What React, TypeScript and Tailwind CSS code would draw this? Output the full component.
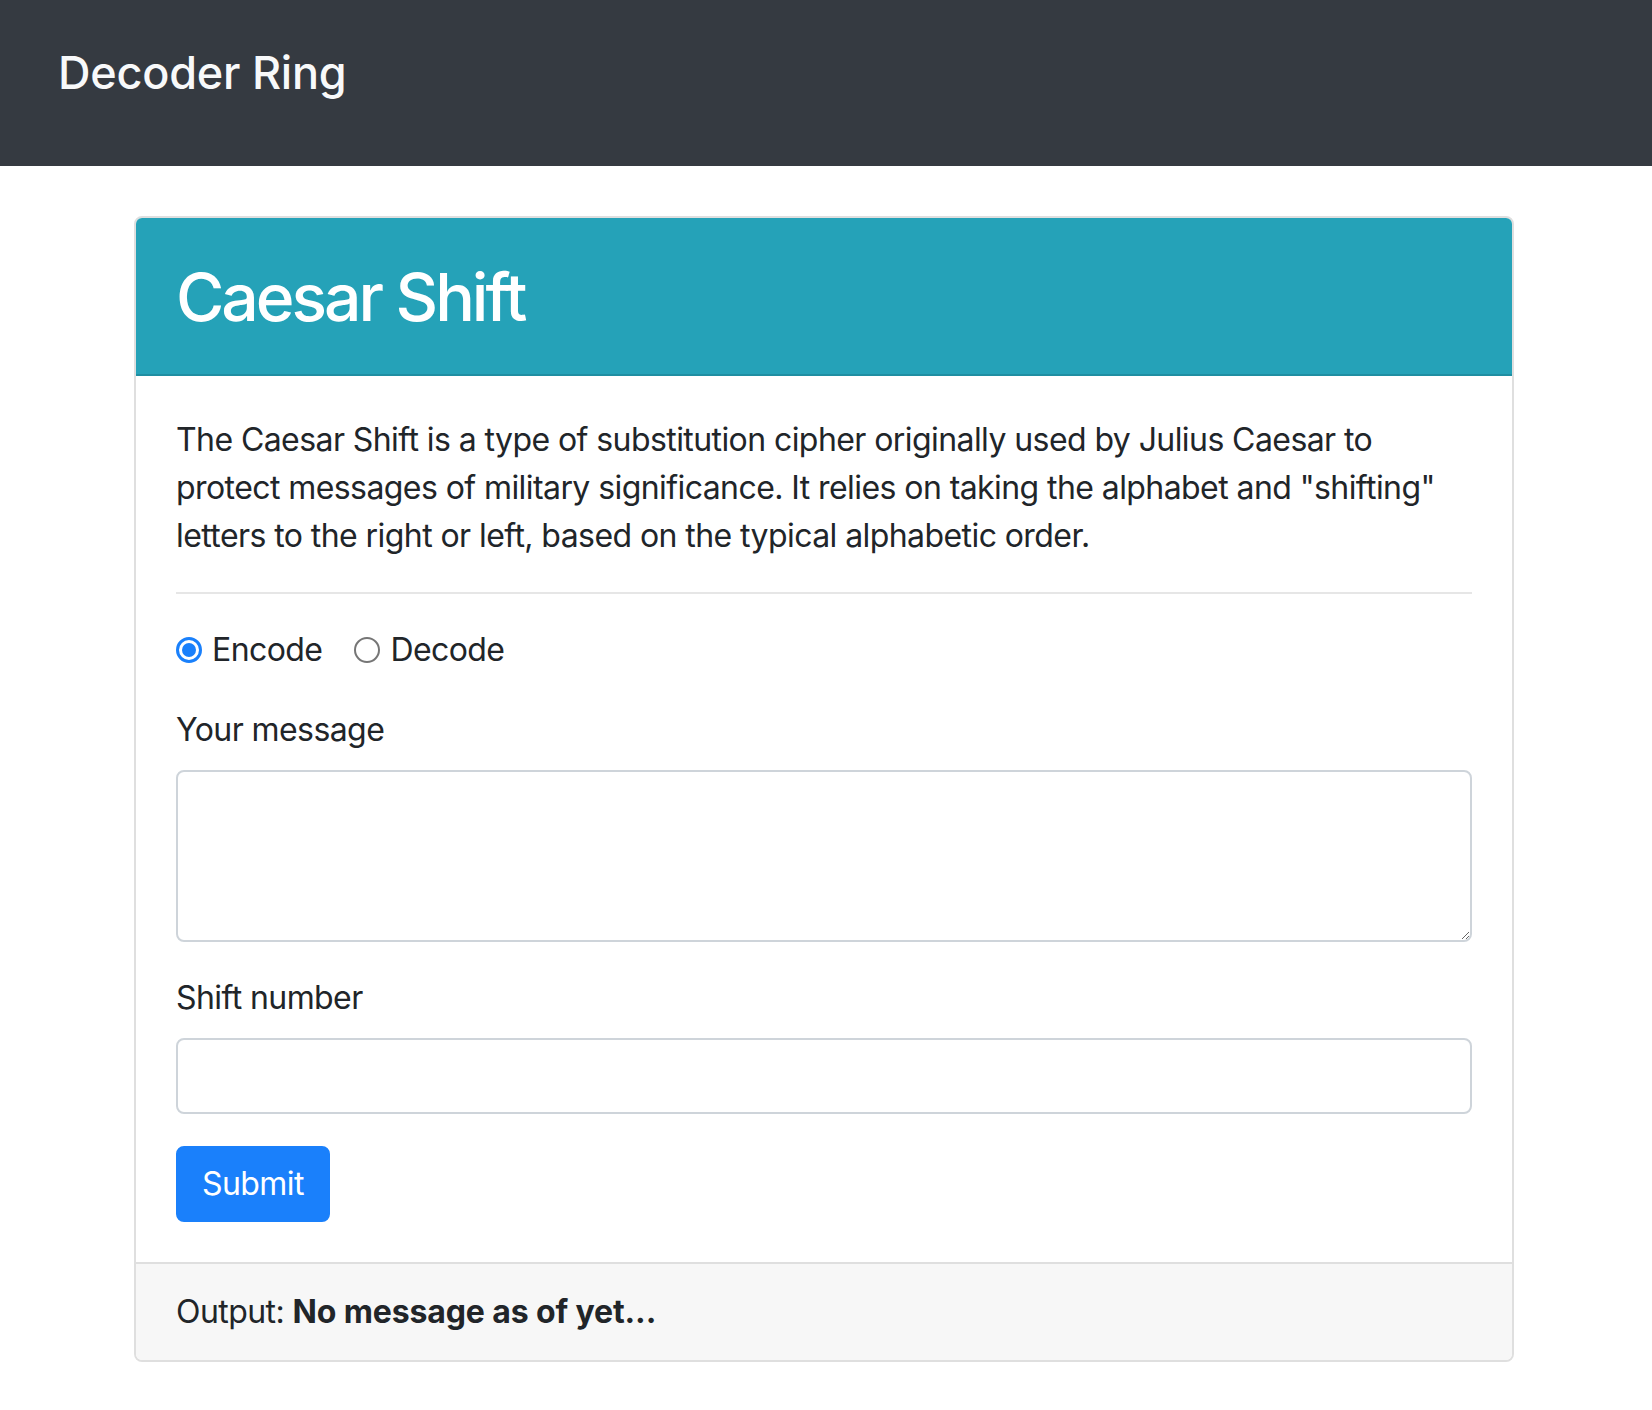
import React from "react";

function Radio({ checked }: { checked: boolean }) {
  if (checked) {
    return (
      <span className="flex h-[26px] w-[26px] shrink-0 items-center justify-center rounded-full border-[3px] border-[#1a80fb] bg-white">
        <span className="h-[14px] w-[14px] rounded-full bg-[#1a80fb]" />
      </span>
    );
  }
  return <span className="h-[26px] w-[26px] shrink-0 rounded-full border-2 border-[#767676] bg-white" />;
}

export default function App() {
  return (
    <div className="min-h-screen bg-white text-[#212529] [font-family:Inter,'Liberation_Sans',sans-serif]">
      <header className="h-[166px] bg-[#353a41] pl-[58px] pt-[46px]">
        <h1 className="text-[45px] font-medium leading-[54px] tracking-[-0.005em] text-[#f8f9fa]">Decoder Ring</h1>
      </header>

      <main className="ml-[134px] mt-[50px] w-[1380px] overflow-hidden rounded-[8px] border-2 border-[#dfdfdf]">
        <div className="border-b-2 border-[#1f8ea2] bg-[#25a2b8] px-[40px] pb-[37px] pt-[39px]">
          <h2 className="text-[66px] font-medium leading-[80px] tracking-[-0.046em] text-white">Caesar Shift</h2>
        </div>

        <div className="px-[40px] py-[40px] text-[32px] leading-[48px] tracking-[-0.018em]">
          <p>
            The Caesar Shift is a type of substitution cipher originally used by Julius Caesar to protect messages of
            military significance. It relies on taking the alphabet and "shifting" letters to the right or left, based
            on the typical alphabetic order.
          </p>

          <hr className="my-[32px] border-0 border-t-2 border-[#e6e6e6]" />

          <div className="flex h-[48px] items-center">
            <label className="mr-[32px] flex items-center gap-[10px]">
              <Radio checked={true} />
              <span>Encode</span>
            </label>
            <label className="flex items-center gap-[10px]">
              <Radio checked={false} />
              <span>Decode</span>
            </label>
          </div>

          <label className="mb-[16px] mt-[32px] block">Your message</label>
          <textarea className="block h-[172px] w-full resize-y rounded-[8px] border-2 border-[#ced4da] bg-white px-[24px] py-[12px] outline-none" />

          <label className="mb-[16px] mt-[32px] block">Shift number</label>
          <input
            type="number"
            className="block h-[76px] w-full rounded-[8px] border-2 border-[#ced4da] bg-white px-[24px] outline-none"
          />

          <button className="mt-[32px] h-[76px] rounded-[8px] border-2 border-[#1a80fb] bg-[#1a80fb] px-[24px] text-white">
            Submit
          </button>
        </div>

        <div className="border-t-2 border-[#dfdfdf] bg-[#f7f7f7] px-[40px] py-[24px] text-[32px] leading-[48px] tracking-[-0.018em]">
          Output: <strong className="font-bold tracking-[-0.004em]">No message as of yet...</strong>
        </div>
      </main>
    </div>
  );
}
